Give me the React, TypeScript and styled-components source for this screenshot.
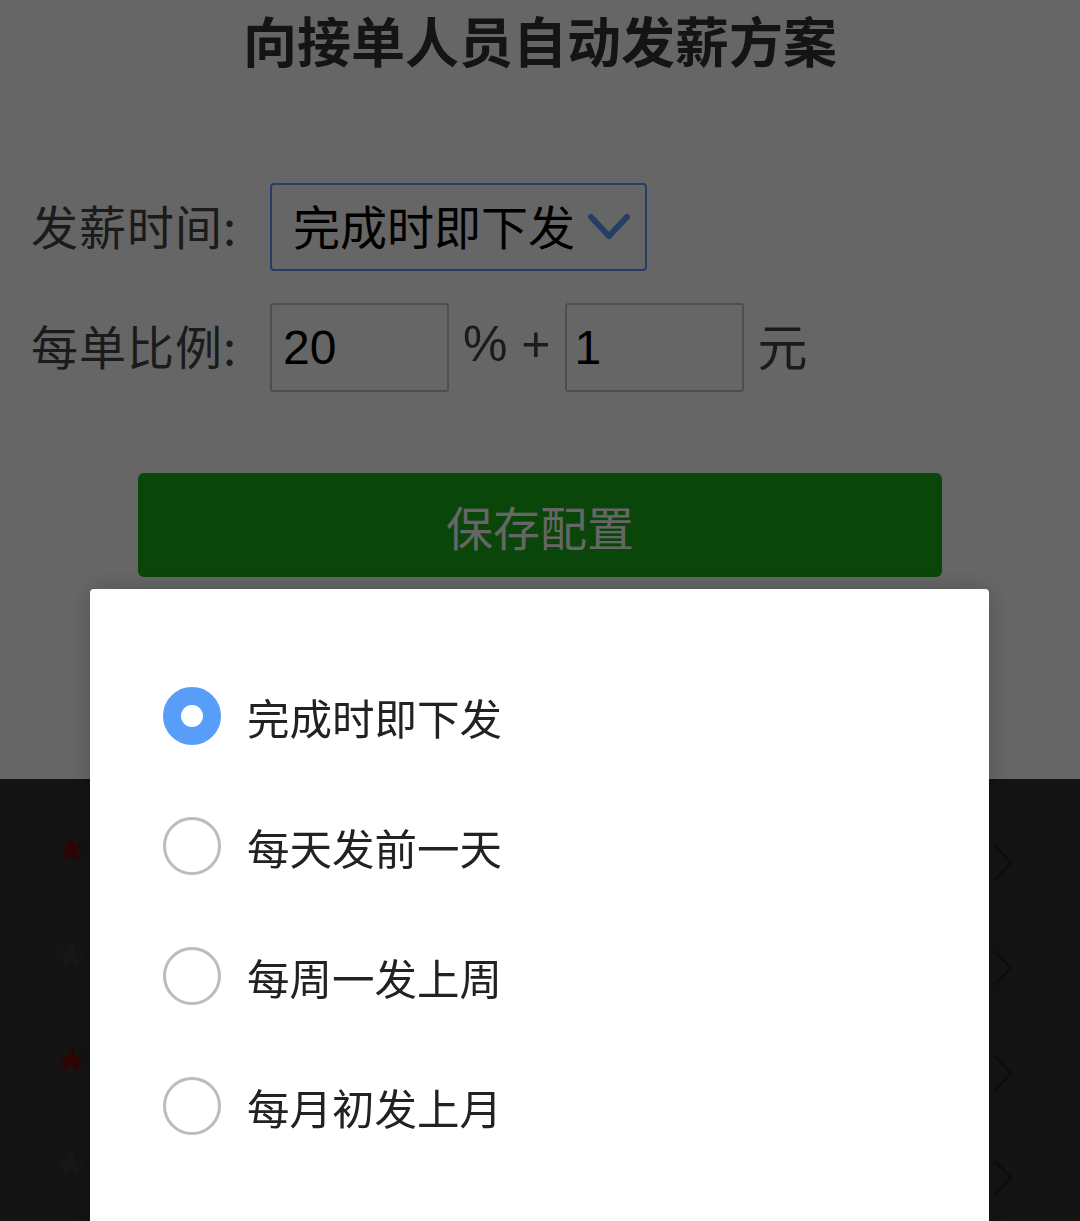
import React, { useState } from "react";
import styled, { createGlobalStyle } from "styled-components";

const GlobalStyle = createGlobalStyle`
  html, body {
    margin: 0;
    padding: 0;
    background: #ffffff;
  }

  body {
    font-family: "Noto Sans CJK SC", "Noto Sans", sans-serif;
    overflow: hidden;
  }
`;

const Page = styled.div`
  display: flex;
  flex-direction: column;
  min-height: 1221px;
  background: #ffffff;
`;

const Title = styled.h1`
  margin: 0;
  height: 80px;
  line-height: 80px;
  text-align: center;
  font-size: 54px;
  font-weight: 700;
  color: #333333;
`;

const Form = styled.div`
  display: flex;
  flex-direction: column;
  gap: 32px;
  margin-top: 103px;
  padding-left: 31px;
`;

const FormRow = styled.div`
  display: flex;
  align-items: center;
  height: 88px;
`;

const Label = styled.span`
  width: 239px;
  margin-top: -6px;
  font-size: 47px;
  letter-spacing: 1px;
  color: #444444;
  white-space: nowrap;
`;

const Select = styled.div`
  box-sizing: border-box;
  display: flex;
  align-items: center;
  justify-content: space-between;
  width: 377px;
  height: 88px;
  padding: 0 14px 6px 21px;
  border: 2px solid #5b9cff;
  border-radius: 4px;
  font-size: 47px;
  color: #000000;

  svg {
    margin-top: 6px;
  }
`;

const Input = styled.div<{ $pad: number }>`
  box-sizing: border-box;
  display: flex;
  align-items: center;
  width: 179px;
  height: 89px;
  padding-left: ${(p) => p.$pad}px;
  border: 2px solid #c4c4c4;
  border-radius: 3px;
  font-family: "Liberation Sans", "Noto Sans CJK SC", sans-serif;
  font-size: 48px;
  color: #000000;
`;

const Unit = styled.span`
  margin: -6px 14px 0;
  font-family: "Liberation Sans", "Noto Sans CJK SC", sans-serif;
  font-size: 50px;
  color: #444444;
  white-space: nowrap;
`;

const SaveButton = styled.button`
  align-self: center;
  width: 804px;
  height: 104px;
  margin-top: 82px;
  border: none;
  border-radius: 6px;
  background: #1aad19;
  color: #ffffff;
  font-family: "Noto Sans CJK SC", sans-serif;
  font-size: 47px;
`;

const DarkSection = styled.div`
  flex: 1;
  display: flex;
  flex-direction: column;
  margin-top: 202px;
  padding-top: 22px;
  background: #323232;
`;

const DarkRow = styled.div`
  display: flex;
  align-items: center;
  justify-content: space-between;
  height: 105px;
  padding: 0 66px 0 60px;
`;

const Star = styled.span<{ $red: boolean }>`
  font-family: "Liberation Sans", sans-serif;
  font-size: 58px;
  font-weight: 700;
  line-height: 1;
  margin-top: 10px;
  color: ${(p) => (p.$red ? "#7a0a0a" : "#3a3a3a")};
`;

const Mask = styled.div`
  position: fixed;
  inset: 0;
  background: rgba(0, 0, 0, 0.6);
`;

const Sheet = styled.div`
  position: fixed;
  top: 589px;
  left: 90px;
  bottom: 0;
  width: 899px;
  display: flex;
  flex-direction: column;
  padding-top: 62px;
  background: #ffffff;
  border-radius: 4px 4px 0 0;
  box-shadow: 0 0 24px rgba(0, 0, 0, 0.2);
`;

const Option = styled.label`
  display: flex;
  align-items: center;
  gap: 26px;
  height: 130px;
  padding-left: 73px;
  cursor: pointer;
`;

const Radio = styled.span<{ $checked: boolean }>`
  box-sizing: border-box;
  width: 58px;
  height: 58px;
  border-radius: 50%;
  border: ${(p) => (p.$checked ? "18px solid #589ef8" : "3px solid #bcbcbc")};
  background: #ffffff;
`;

const OptionText = styled.span`
  font-size: 42.5px;
  color: #222222;
`;

const options = ["完成时即下发", "每天发前一天", "每周一发上周", "每月初发上月"];

const darkRows = [true, false, true, false];

const ChevronDown = () => (
  <svg width="44" height="30" viewBox="0 0 44 30" fill="none">
    <path d="M4 5 L22 24 L40 5" stroke="#5b9cff" strokeWidth="6" strokeLinecap="round" strokeLinejoin="round" />
  </svg>
);

const ChevronRight = () => (
  <svg width="22" height="40" viewBox="0 0 22 40" fill="none" style={{ marginTop: 18 }}>
    <path d="M3 3 L19 20 L3 37" stroke="#222222" strokeWidth="3" />
  </svg>
);

export default function App() {
  const [selected, setSelected] = useState(0);

  return (
    <>
      <GlobalStyle />
      <Page>
        <Title>向接单人员自动发薪方案</Title>
        <Form>
          <FormRow>
            <Label>发薪时间:</Label>
            <Select>
              {options[selected]}
              <ChevronDown />
            </Select>
          </FormRow>
          <FormRow>
            <Label>每单比例:</Label>
            <Input $pad={11}>20</Input>
            <Unit>% +</Unit>
            <Input $pad={8}>1</Input>
            <Unit>元</Unit>
          </FormRow>
        </Form>
        <SaveButton>保存配置</SaveButton>
        <DarkSection>
          {darkRows.map((red, i) => (
            <DarkRow key={i}>
              <Star $red={red}>*</Star>
              <ChevronRight />
            </DarkRow>
          ))}
        </DarkSection>
      </Page>
      <Mask />
      <Sheet>
        {options.map((text, i) => (
          <Option key={text} onClick={() => setSelected(i)}>
            <Radio $checked={selected === i} />
            <OptionText>{text}</OptionText>
          </Option>
        ))}
      </Sheet>
    </>
  );
}
